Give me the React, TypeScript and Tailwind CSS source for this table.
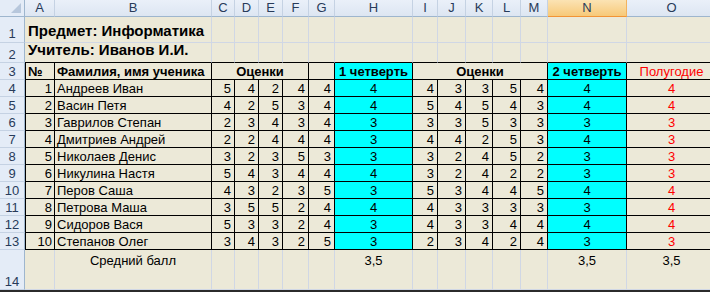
const cols = ['A', 'B', 'C', 'D', 'E', 'F', 'G', 'H', 'I', 'J', 'K', 'L', 'M', 'N', 'O'];

const students: [string, number[], number, number[], number, number][] = [
  ['Андреев Иван', [5, 4, 2, 4, 4], 4, [4, 3, 3, 5, 4], 4, 4],
  ['Васин Петя', [4, 2, 5, 3, 4], 4, [5, 4, 5, 4, 3], 4, 4],
  ['Гаврилов Степан', [2, 3, 4, 3, 4], 3, [3, 3, 5, 3, 3], 3, 3],
  ['Дмитриев Андрей', [2, 2, 4, 4, 4], 3, [4, 4, 2, 5, 3], 4, 3],
  ['Николаев Денис', [3, 2, 3, 5, 3], 3, [3, 2, 4, 5, 2], 3, 3],
  ['Никулина Настя', [5, 4, 3, 4, 4], 4, [3, 2, 4, 2, 2], 3, 3],
  ['Перов Саша', [4, 3, 2, 3, 5], 3, [5, 3, 4, 4, 5], 4, 4],
  ['Петрова Маша', [3, 5, 5, 2, 4], 4, [4, 3, 3, 3, 3], 3, 4],
  ['Сидоров Вася', [5, 3, 3, 2, 4], 3, [4, 3, 3, 4, 4], 4, 4],
  ['Степанов Олег', [3, 4, 3, 2, 5], 3, [2, 3, 4, 2, 4], 3, 3],
];

// thin light gridline cell / black-bordered table cell
const gl = 'border-r border-b border-[#d0d7e5]';
const tb = 'border-r border-b border-black';
const rowHdr =
  'flex items-end justify-center bg-[#e4ecf7] border-r border-b border-r-[#9eb6ce] border-b-[#c5d2e3] text-[#283b5a] leading-[15px]';

export default function App() {
  return (
    <div
      className="w-[710px] h-[292px] overflow-hidden bg-[#ece9d8] text-[13px] text-black"
      style={{ fontFamily: '"Liberation Sans", Arial, sans-serif' }}
    >
      <div className="grid grid-cols-[25px_30px_157px_23px_24px_24px_26px_26px_78px_25px_28px_27px_28px_27px_79px_90px] grid-rows-[17px_26px_20px_repeat(11,17px)_40px]">
        {/* column headers */}
        <div className="relative bg-[#e4ecf7] border-r border-b border-[#9eb6ce]">
          <svg className="absolute right-[3px] bottom-[3px]" width="10" height="10" viewBox="0 0 10 10">
            <polygon points="10,0 10,10 0,10" fill="#b7c7dc" />
          </svg>
        </div>
        {cols.map((c) =>
          c === 'N' ? (
            <div
              key={c}
              className="flex items-center justify-center bg-gradient-to-b from-[#fbe3b3] to-[#f7c978] border-r border-b border-r-[#f2b35f] border-b-[#f29436] text-[#283b5a]"
            >
              {c}
            </div>
          ) : (
            <div
              key={c}
              className="flex items-center justify-center bg-gradient-to-b from-[#eaf0f9] to-[#dde6f2] border-r border-b border-r-[#c5d2e3] border-b-[#9eb6ce] text-[#283b5a]"
            >
              {c}
            </div>
          )
        )}

        {/* row 1 */}
        <div className={rowHdr + ' pb-[1px]'}>1</div>
        <div className={`col-span-2 flex items-end pl-[3px] font-bold text-[15px] whitespace-nowrap ${gl}`}>
          Предмет: Информатика
        </div>
        {cols.slice(2).map((c) => (
          <div key={c} className={gl} />
        ))}

        {/* row 2 */}
        <div className={rowHdr}>2</div>
        <div className="col-span-2 flex items-end pl-[3px] pb-[1px] font-bold text-[15px] whitespace-nowrap border-r border-r-[#d0d7e5] border-b border-b-black">
          Учитель: Иванов И.И.
        </div>
        {cols.slice(2).map((c) => (
          <div key={c} className="border-r border-r-[#d0d7e5] border-b border-b-black" />
        ))}

        {/* row 3 */}
        <div className={rowHdr}>3</div>
        <div className={`flex items-end pl-[2px] font-bold leading-[15px] border-l ${tb}`}>№</div>
        <div className={`flex items-end pl-[2px] font-bold leading-[15px] whitespace-nowrap ${tb}`}>Фамилия, имя ученика</div>
        <div className={`col-span-4 flex items-end justify-center font-bold leading-[15px] ${tb}`}>Оценки</div>
        <div className={tb} />
        <div className={`flex items-end justify-center font-bold leading-[15px] bg-[#00ffff] ${tb}`}>1 четверть</div>
        <div className={`col-span-5 flex items-end justify-center font-bold leading-[15px] ${tb}`}>Оценки</div>
        <div className={`flex items-end justify-center font-bold leading-[15px] bg-[#00ffff] ${tb}`}>2 четверть</div>
        <div className={`flex items-end justify-center leading-[15px] text-[#ff0000] ${tb}`}>Полугодие</div>

        {/* rows 4-13 */}
        {students.map(([name, q1, t1, q2, t2, half], i) => (
          <div key={name} className="contents">
            <div className={rowHdr}>{i + 4}</div>
            <div className={`flex items-end justify-end pr-[2px] leading-[15px] border-l ${tb}`}>{i + 1}</div>
            <div className={`flex items-end pl-[2px] leading-[15px] whitespace-nowrap ${tb}`}>{name}</div>
            {q1.map((g, j) => (
              <div key={'a' + j} className={`flex items-end justify-end pr-[3px] leading-[15px] ${tb}`}>{g}</div>
            ))}
            <div className={`flex items-end justify-center leading-[15px] bg-[#00ffff] ${tb}`}>{t1}</div>
            {q2.map((g, j) => (
              <div key={'b' + j} className={`flex items-end justify-end pr-[3px] leading-[15px] ${tb}`}>{g}</div>
            ))}
            <div className={`flex items-end justify-center leading-[15px] bg-[#00ffff] ${tb}`}>{t2}</div>
            <div className={`flex items-end justify-center leading-[15px] text-[#ff0000] ${tb}`}>{half}</div>
          </div>
        ))}

        {/* row 14 */}
        <div className={rowHdr}>14</div>
        <div className={gl} />
        <div className={`flex justify-center pt-[3px] leading-[15px] ${gl}`}>Средний балл</div>
        {['C', 'D', 'E', 'F', 'G'].map((c) => (
          <div key={c} className={gl} />
        ))}
        <div className={`flex justify-center pt-[3px] leading-[15px] ${gl}`}>3,5</div>
        {['I', 'J', 'K', 'L', 'M'].map((c) => (
          <div key={c} className={gl} />
        ))}
        <div className={`flex justify-center pt-[3px] leading-[15px] ${gl}`}>3,5</div>
        <div className={`flex justify-center pt-[3px] leading-[15px] ${gl}`}>3,5</div>
      </div>
      <div className="h-[2px] bg-[#2b2b2b]" />
    </div>
  );
}
